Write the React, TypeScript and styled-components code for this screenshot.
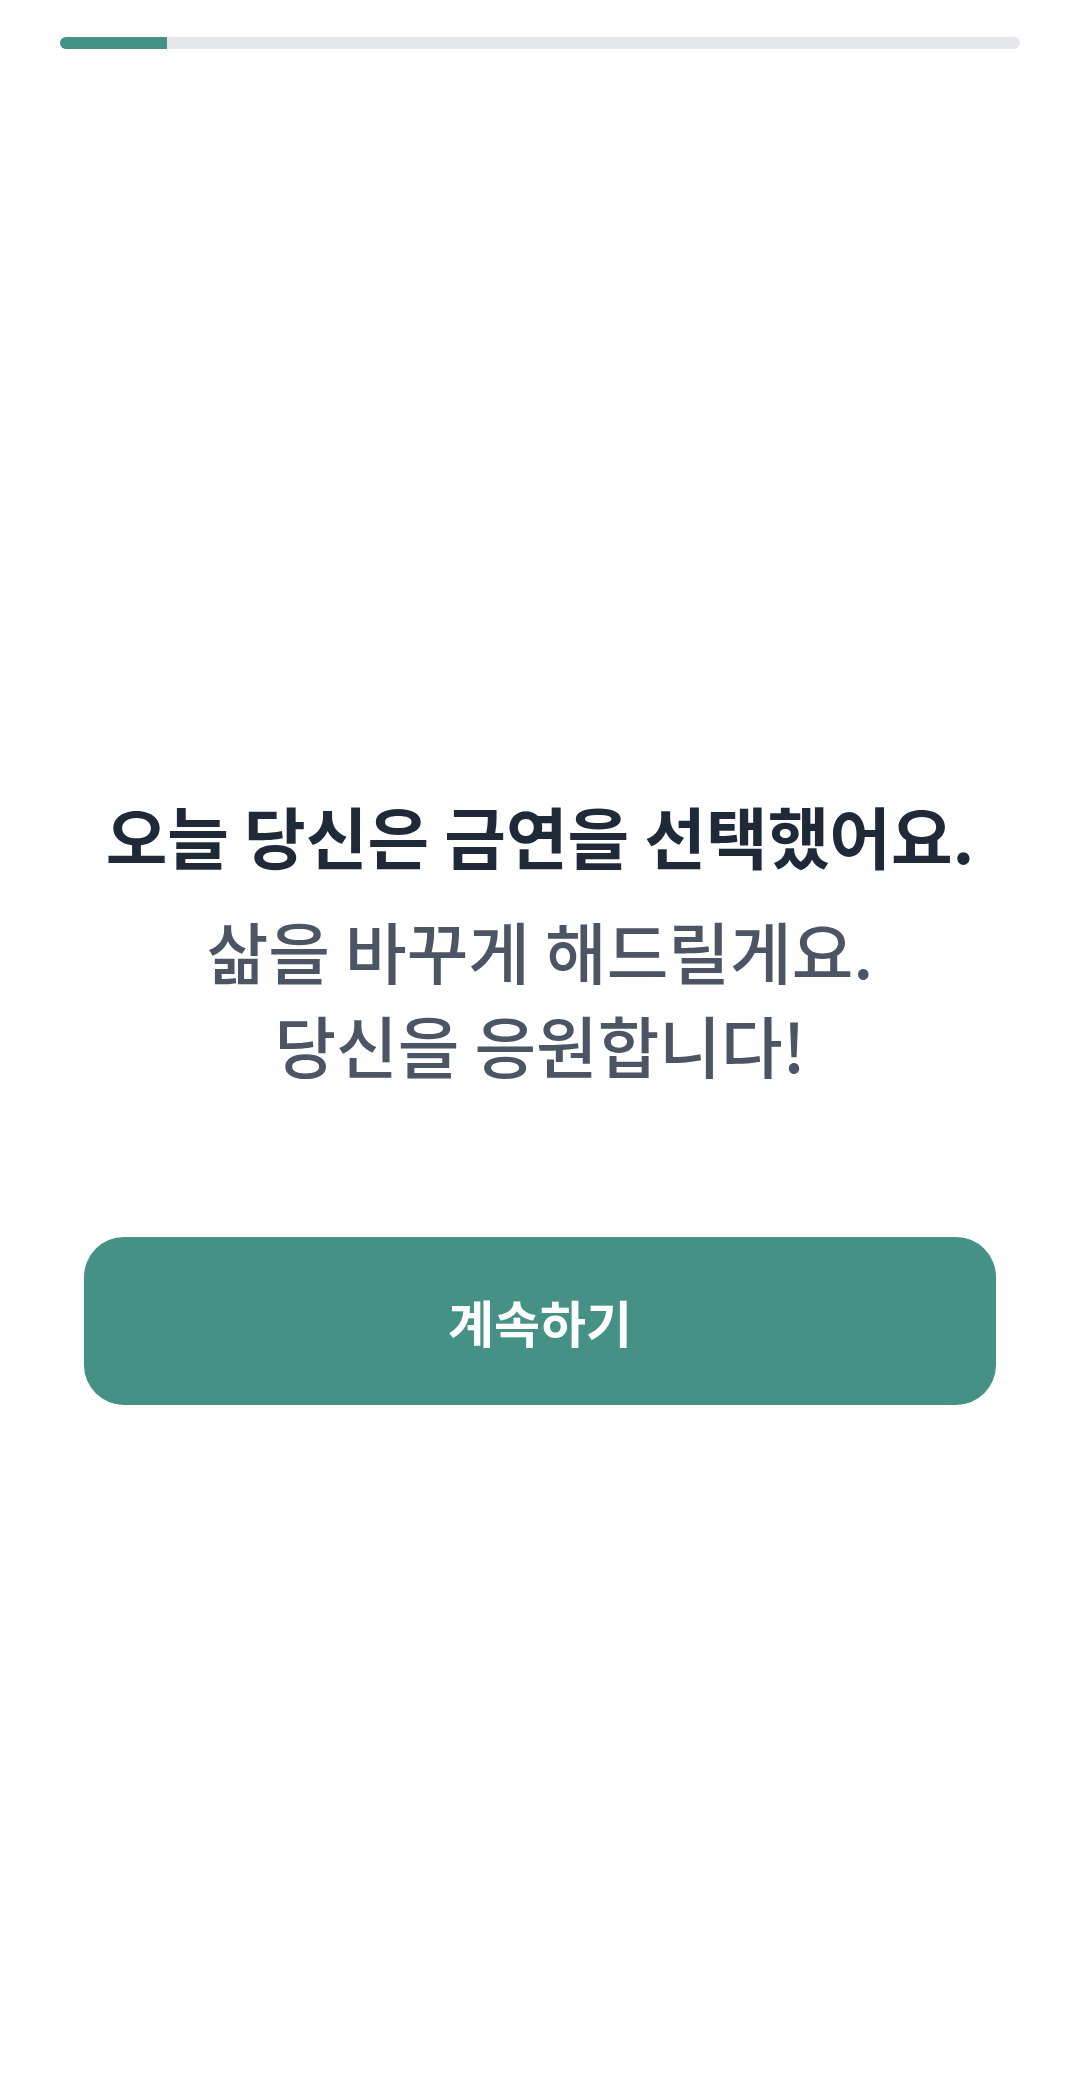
import React from "react";
import styled, { createGlobalStyle } from "styled-components";

const GlobalStyle = createGlobalStyle`
  html, body {
    margin: 0;
    padding: 0;
    background: #ffffff;
  }
  body {
    font-family: "Noto Sans CJK KR", "Noto Sans", sans-serif;
    -webkit-font-smoothing: antialiased;
  }
  * { box-sizing: border-box; }
`;

const Screen = styled.div`
  width: 1080px;
  min-height: 2086px;
  display: flex;
  flex-direction: column;
  background: #ffffff;
`;

const ProgressTrack = styled.div`
  margin: 37px 60px 0;
  height: 12px;
  border-radius: 6px;
  background: #e5e7eb;
  overflow: hidden;
  display: flex;
`;

const ProgressFill = styled.div`
  height: 100%;
  background: #459186;
`;

const Content = styled.main`
  display: flex;
  flex-direction: column;
  align-items: center;
  padding: 742px 84px 0;
`;

const Heading = styled.h1`
  margin: 0;
  font-size: 67px;
  line-height: 87px;
  font-weight: 700;
  color: #1f2937;
  text-align: center;
  white-space: nowrap;
`;

const Message = styled.p`
  margin: 25px 0 0;
  font-size: 67px;
  line-height: 94px;
  font-weight: 500;
  color: #4b5563;
  text-align: center;
`;

const ContinueButton = styled.button`
  margin-top: 146px;
  width: 100%;
  height: 168px;
  border: none;
  border-radius: 40px;
  background: #459186;
  color: #ffffff;
  font-family: "Noto Sans CJK KR", "Noto Sans", sans-serif;
  font-size: 50px;
  font-weight: 600;
  cursor: pointer;
  display: flex;
  align-items: center;
  justify-content: center;
`;

const progress = 107 / 960;

export default function App() {
  return (
    <>
      <GlobalStyle />
      <Screen>
        <ProgressTrack>
          <ProgressFill style={{ width: `${progress * 100}%` }} />
        </ProgressTrack>
        <Content>
          <Heading>오늘 당신은 금연을 선택했어요.</Heading>
          <Message>
            삶을 바꾸게 해드릴게요.
            <br />
            당신을 응원합니다!
          </Message>
          <ContinueButton type="button">계속하기</ContinueButton>
        </Content>
      </Screen>
    </>
  );
}
